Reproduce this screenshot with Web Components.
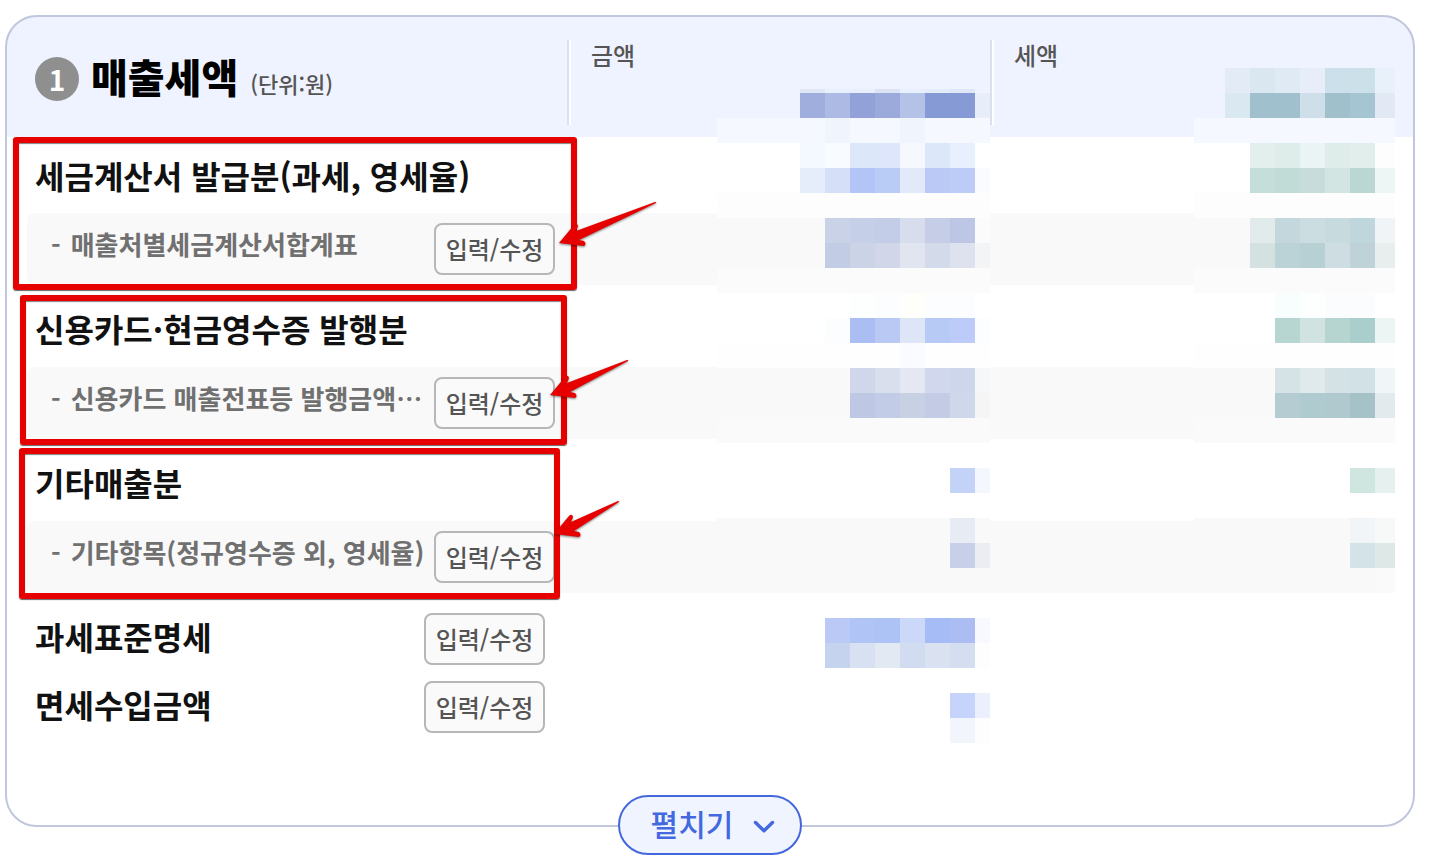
<!DOCTYPE html>
<html lang="ko">
<head>
<meta charset="utf-8">
<title>매출세액</title>
<style>
  body {
    margin: 0;
    background: #fff;
    font-family: "Noto Sans CJK KR", "Noto Sans", sans-serif;
    color: #111;
  }
</style>
</head>
<body>
<tax-page>
  <tax-card number="1">
    <span slot="title">매출세액</span>
    <span slot="unit">(단위:원)</span>
  </tax-card>

  <mark-box slot="marks" style="left: 13px; top: 137px; width: 564px; height: 153px"></mark-box>
  <mark-box slot="marks" style="left: 20px; top: 295px; width: 547px; height: 150px"></mark-box>
  <mark-box slot="marks" style="left: 19px; top: 448px; width: 541px; height: 151px"></mark-box>
  <mark-arrow slot="marks" dx="97" dy="-41" style="left: 559px; top: 243px"></mark-arrow>
  <mark-arrow slot="marks" dx="78" dy="-35" style="left: 550px; top: 395px"></mark-arrow>
  <mark-arrow slot="marks" dx="65" dy="-33" style="left: 554px; top: 534px"></mark-arrow>
</tax-page>

<script>
const ROWS = [
  { type: 'group', text: '세금계산서 발급분(과세, 영세율)' },
  { type: 'sub', text: '매출처별세금계산서합계표' },
  { type: 'group', text: '신용카드·현금영수증 발행분' },
  { type: 'sub', text: '신용카드 매출전표등 발행금액…' },
  { type: 'group', text: '기타매출분' },
  { type: 'sub', text: '기타항목(정규영수증 외, 영세율)' },
  { type: 'single', text: '과세표준명세' },
  { type: 'single', text: '면세수입금액' },
];

// One entry per 25px line: [line background, cell colours]. Cells are aligned
// to the right and the last one is narrow. '-' leaves a cell empty. A 'sliver'
// line fills only its bottom edge.
const VEILS = {
  amount: [
    ['', 'dfe6f6 e9f0fd e9f0fd dbe3f4 e9f0fd e5ecf9 dfe6f6 -', 'sliver'],
    ['', '9faedd acbae4 92a1d7 9caadb b4c2e8 869bd6 869ad5 e7edf9'],
    ['f5f8ff', 'f0f4fc - - f0f4fc - - -'],
    ['fff', 'f4f8ff f8fbff dde7fa dde6fa f5f9fe dde7fa e8f0fd -'],
    ['fff', 'e5edfb d5dff7 b2c5f6 b8ccf5 e2e9f8 bac9f5 bdccf7 f9fbff'],
    ['fdfdfd', ''],
    ['f9f9f9', 'cad2e7 c5cfe8 c3cde8 d8dded c6cde7 bdc7e5 fbfbfb'],
    ['f9f9f9', 'c2cce5 cbd3e7 d1d6e9 e1e5ef d3dae9 dee2ef f3f4f6'],
    ['fbfbfb', ''],
    ['fff', 'fcfffd fcfdff fefffb fbfdff fbfdff -'],
    ['fff', 'fcfdff abbef4 bac9f4 dee5f7 b7c9f5 bccbf7 fbfdff'],
    ['fefefe', 'f9fbff - - -'],
    ['f9f9f9', 'd1d7eb d9dfed e5e8f3 d1d7ec cdd6eb f5f7f9'],
    ['f9f9f9', 'bec8e4 c2cce6 c8d0e4 c4cbe5 cfd7ea f5f5f5'],
    ['fafafa', ''],
    ['fff', ''],
    ['fff', 'c3d3f8 f4f8fe'],
    ['fff', ''],
    ['f9f9f9', 'e6ebf4 -'],
    ['f9f9f9', 'c8d0e9 ecedf2'],
    ['f9f9f9', ''],
    ['fff', ''],
    ['fff', 'bac9f5 b1c4f6 adc3f5 cbd8f8 a5bcf6 acbdf4 f7f9fe'],
    ['fff', 'c5d3ef d8e1f2 e2e9f3 d1dcf0 dae2f2 d5def1 fdfdfd'],
    ['fff', ''],
    ['fff', 'c6d3fa ebf0fc'],
    ['fff', 'f2f5fb fdfdfd'],
  ],
  tax: [
    ['', 'e3ebf7 dae7f1 dfeaf4 e8eef9 cce0eb cce0ea e8f0fa'],
    ['', 'dae8f1 9fc0cc 9fc0cc cfdfea a0c1cc a5c5d2 e2e9f5'],
    ['f5f8ff', ''],
    ['fff', 'e2efed deedea eaf4f4 deedea e1eeeb fdfdfd'],
    ['fff', 'c5ded9 c1dbd7 c8dddb d2e5e2 bbd7d3 eef5f5'],
    ['fdfdfd', ''],
    ['f9f9f9', 'e1ebeb c4d7dc cbdde1 c7dbdf bfd7dc f0f4f6'],
    ['f9f9f9', 'd3e2e1 bbd3d6 b6d0d4 cddde1 bed2d8 e8eeed'],
    ['fbfbfb', ''],
    ['fff', 'f8fdfd fdfffe fafcfe fafcfe -'],
    ['fff', 'b8d6d1 d0e3e0 b7d5d0 a9cecb ecf4f4'],
    ['fefefe', ''],
    ['f9f9f9', 'd5e2e6 e0e9ec d4e2e5 d2e1e5 f0f5f7'],
    ['f9f9f9', 'b5cdd2 b0cbd0 b0c9ce a5c2c8 e2eaed'],
    ['fafafa', ''],
    ['fff', ''],
    ['fff', 'cfe5e0 e6f0ee'],
    ['fff', ''],
    ['f9f9f9', 'f1f5f7 f7f9f9'],
    ['f9f9f9', 'd4e3e7 dee8e7'],
    ['f9f9f9', 'fafafa'],
  ],
};

class TaxPage extends HTMLElement {
  constructor() {
    super();

    this.root = this.attachShadow({ mode: 'open' });
    this.root.innerHTML = `
      <style>
        :host {
          display: block;
          position: relative;
          padding: 15px 35px 40px 5px;
        }
      </style>

      <slot></slot>
      <slot name="marks"></slot>
    `;
  }
}

class EditButton extends HTMLElement {
  constructor() {
    super();

    this.root = this.attachShadow({ mode: 'open' });
    this.root.innerHTML = `
      <style>
        :host {
          display: block;
          flex: none;
        }

        button {
          display: block;
          box-sizing: border-box;
          width: 121px;
          height: 52px;
          padding: 0;
          border: 2px solid #b7b7b7;
          border-radius: 8px;
          background: #fafafa;
          color: #555;
          font: 500 24px/48px "Noto Sans CJK KR", "Noto Sans", sans-serif;
          white-space: nowrap;
        }
      </style>

      <button type="button"><slot>입력/수정</slot></button>
    `;
  }
}

class ExpandButton extends HTMLElement {
  constructor() {
    super();

    this.root = this.attachShadow({ mode: 'open' });
    this.root.innerHTML = `
      <style>
        :host {
          display: block;
        }

        button {
          display: flex;
          align-items: center;
          justify-content: center;
          gap: 20px;
          box-sizing: border-box;
          width: 184px;
          height: 60px;
          padding: 0 0 4px 6px;
          border: 2px solid #4468dc;
          border-radius: 30px;
          background: #eff4ff;
          color: #4468e0;
          font: 500 30px/52px "Noto Sans CJK KR", "Noto Sans", sans-serif;
        }

        svg {
          display: block;
          margin-top: 8px;
        }
      </style>

      <button type="button">
        <slot></slot>
        <svg width="22" height="14" viewBox="0 0 22 14" aria-hidden="true">
          <path d="M2.5 2.5 L11 10.8 L19.5 2.5" fill="none" stroke="#4468e0" stroke-width="3.4" stroke-linecap="round" stroke-linejoin="round"/>
        </svg>
      </button>
    `;
  }
}

// Pixelated cover over the private figures of a column.
class MosaicVeil extends HTMLElement {
  constructor() {
    super();

    this.root = this.attachShadow({ mode: 'open' });
    this.root.innerHTML = `
      <style>
        :host {
          display: block;
        }

        .line {
          display: flex;
          justify-content: flex-end;
          height: 25px;
        }

        .line > i {
          width: 25px;
        }

        .line > i:last-child {
          width: var(--last-cell, 20px);
        }

        .sliver {
          box-sizing: border-box;
          padding-top: 21px;
        }
      </style>
    `;
  }

  connectedCallback() {
    VEILS[this.getAttribute('name')].forEach(([back, cells, kind]) => {
      const line = document.createElement('div');
      line.className = 'line';
      if (kind) line.classList.add(kind);
      if (back) line.style.background = '#' + back;
      cells.split(' ').filter(Boolean).forEach(color => {
        const cell = document.createElement('i');
        if (color !== '-') cell.style.background = '#' + color;
        line.appendChild(cell);
      });
      this.root.appendChild(line);
    });
  }
}

class TaxCard extends HTMLElement {
  constructor() {
    super();

    this.root = this.attachShadow({ mode: 'open' });
    this.root.innerHTML = `
      <style>
        :host {
          display: block;
          position: relative;
          padding: 0 18px 84px 20px;
          border: 2px solid #c0c6dc;
          border-radius: 32px;
          background: linear-gradient(#eff3ff 120px, #fff 120px);
        }

        table {
          width: 100%;
          border-collapse: separate;
          border-spacing: 0;
          table-layout: fixed;
        }

        .col-name {
          width: 540px;
        }

        .col-tax {
          width: 405px;
        }

        th, td {
          padding: 0;
          font-weight: 500;
          text-align: left;
        }

        thead th {
          position: relative;
          height: 120px;
        }

        .heading {
          display: flex;
          align-items: center;
          padding: 4px 0 0 8px;
        }

        .number {
          width: 44px;
          margin-right: 12px;
          border-radius: 50%;
          background: #8f8f8f;
          color: #fff;
          font-size: 28px;
          font-weight: 700;
          line-height: 44px;
          text-align: center;
        }

        .names {
          display: flex;
          align-items: baseline;
          gap: 12px;
          padding-bottom: 6px;
          white-space: nowrap;
        }

        .title {
          color: #000;
          font-size: 40px;
          font-weight: 900;
          line-height: 60px;
        }

        .unit {
          color: #555;
          font-size: 22px;
          font-weight: 500;
        }

        .column {
          box-sizing: border-box;
          height: 85px;
          margin-top: 10px;
          padding-left: 22px;
          border-left: 2px solid #dce0ee;
          box-shadow: inset 2px 0 #fff;
          color: #555;
          font-size: 24px;
          line-height: 30px;
        }

        mosaic-veil {
          position: absolute;
          top: 51px;
          right: 0;
        }

        .veil-amount {
          width: 273px;
          --last-cell: 15px;
        }

        .veil-tax {
          width: 201px;
          --last-cell: 20px;
        }

        .group th {
          box-sizing: border-box;
          height: 82px;
          padding: 4px 0 0 8px;
          font-size: 32px;
          font-weight: 700;
          line-height: 44px;
        }

        .group:first-child th {
          height: 76px;
          padding-top: 0;
        }

        .row {
          display: flex;
          align-items: center;
          justify-content: space-between;
          white-space: nowrap;
        }

        .sub th, .sub td {
          height: 72px;
          background: #f9f9f9;
        }

        .sub th {
          border-radius: 8px 0 0 8px;
          color: #707070;
          font-size: 26px;
          font-weight: 700;
        }

        .sub td:last-child {
          border-radius: 0 8px 8px 0;
        }

        .sub .row {
          padding: 0 12px 0 24px;
        }

        .sub .name {
          display: flex;
          gap: 10px;
          padding-bottom: 12px;
        }

        .single th {
          height: 68px;
          font-size: 32px;
          font-weight: 700;
        }

        .single:nth-last-child(2) th {
          padding-top: 12px;
        }

        .single .row {
          padding: 0 22px 0 8px;
        }

        .single .name {
          padding-bottom: 6px;
        }

        expand-button {
          position: absolute;
          bottom: -30px;
          left: 50%;
          transform: translateX(-50%);
        }
      </style>

      <table>
        <colgroup>
          <col class="col-name">
          <col>
          <col class="col-tax">
        </colgroup>
        <thead>
          <tr>
            <th scope="col">
              <div class="heading">
                <span class="number"></span>
                <div class="names">
                  <span class="title"><slot name="title"></slot></span>
                  <span class="unit"><slot name="unit"></slot></span>
                </div>
              </div>
            </th>
            <th scope="col">
              <div class="column">금액</div>
              <mosaic-veil class="veil-amount" name="amount"></mosaic-veil>
            </th>
            <th scope="col">
              <div class="column">세액</div>
              <mosaic-veil class="veil-tax" name="tax"></mosaic-veil>
            </th>
          </tr>
        </thead>
        <tbody></tbody>
      </table>
      <expand-button>펼치기</expand-button>
    `;
  }

  connectedCallback() {
    this.root.querySelector('.number').textContent = this.getAttribute('number');
    this.root.querySelector('tbody').innerHTML = ROWS.map(row => this.rowHtml(row)).join('');
  }

  rowHtml({ type, text }) {
    let head = text;
    if (type === 'sub') {
      head = `<div class="row"><span class="name"><span>-</span><span>${text}</span></span><edit-button></edit-button></div>`;
    } else if (type === 'single') {
      head = `<div class="row"><span class="name">${text}</span><edit-button></edit-button></div>`;
    }
    return `<tr class="${type}"><th scope="row">${head}</th><td></td><td></td></tr>`;
  }
}

class MarkBox extends HTMLElement {
  constructor() {
    super();

    this.root = this.attachShadow({ mode: 'open' });
    this.root.innerHTML = `
      <style>
        :host {
          position: absolute;
          box-sizing: border-box;
          border: 6px solid #e60000;
          border-radius: 3px;
          box-shadow: 0 1px 1px rgba(0, 0, 0, 0.6), inset 0 1px 1px rgba(0, 0, 0, 0.5);
          pointer-events: none;
        }
      </style>
    `;
  }
}

// Arrow whose tip is the element's own corner; dx and dy lead to the tail.
class MarkArrow extends HTMLElement {
  constructor() {
    super();
    this.root = this.attachShadow({ mode: 'open' });
  }

  connectedCallback() {
    const dx = Number(this.getAttribute('dx'));
    const dy = Number(this.getAttribute('dy'));
    this.root.innerHTML = `
      <style>
        :host {
          position: absolute;
          pointer-events: none;
        }

        svg {
          display: block;
          overflow: visible;
          filter: drop-shadow(0 1px 1px rgba(0, 0, 0, 0.5));
        }
      </style>

      <svg width="1" height="1" aria-hidden="true">
        <path fill="#e60000" d="M0 0 L15 -18 Q18 -21 19 -17 L17 -12 L${dx - 1} ${dy} Q${dx + 1} ${dy} ${dx} ${dy + 1} L20 -3 L25 -2 Q28 1 25 3 Z"/>
      </svg>
    `;
  }
}

customElements.define('edit-button', EditButton);
customElements.define('expand-button', ExpandButton);
customElements.define('mosaic-veil', MosaicVeil);
customElements.define('tax-card', TaxCard);
customElements.define('mark-box', MarkBox);
customElements.define('mark-arrow', MarkArrow);
customElements.define('tax-page', TaxPage);
</script>
</body>
</html>
